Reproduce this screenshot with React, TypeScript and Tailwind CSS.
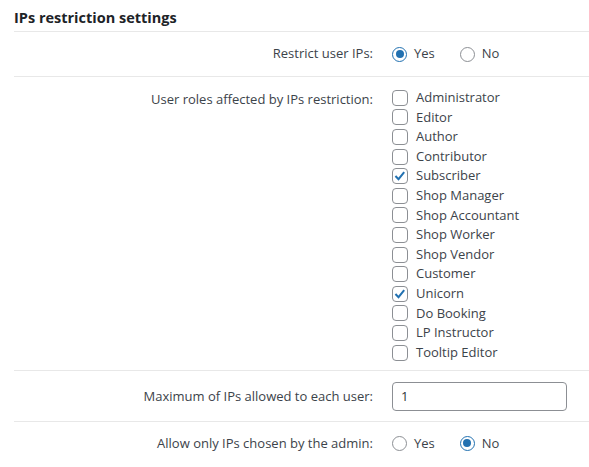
import React from "react";

const roles: { name: string; checked: boolean }[] = [
  { name: "Administrator", checked: false },
  { name: "Editor", checked: false },
  { name: "Author", checked: false },
  { name: "Contributor", checked: false },
  { name: "Subscriber", checked: true },
  { name: "Shop Manager", checked: false },
  { name: "Shop Accountant", checked: false },
  { name: "Shop Worker", checked: false },
  { name: "Shop Vendor", checked: false },
  { name: "Customer", checked: false },
  { name: "Unicorn", checked: true },
  { name: "Do Booking", checked: false },
  { name: "LP Instructor", checked: false },
  { name: "Tooltip Editor", checked: false },
];

const Radio = ({ checked, label }: { checked: boolean; label: string }) => (
  <label className="flex items-center gap-[7px]">
    <span
      className={`flex h-[15px] w-[15px] items-center justify-center rounded-full border ${
        checked ? "border-[#2271b1]" : "border-[#8c8f94]"
      } bg-white`}
    >
      {checked && <span className="h-[8px] w-[8px] rounded-full bg-[#2271b1]" />}
    </span>
    <span>{label}</span>
  </label>
);

const Checkbox = ({ checked, label }: { checked: boolean; label: string }) => (
  <label className="flex h-[19.6px] items-center gap-[8px]">
    <span className="flex h-[16px] w-[16px] items-center justify-center rounded-[4px] border border-[#8c8f94] bg-white">
      {checked && (
        <svg viewBox="0 0 16 16" className="h-[16px] w-[16px]">
          <path d="M2.8 8 L6.3 11.6 L12.8 3.6" fill="none" stroke="#2271b1" strokeWidth="2.3" />
        </svg>
      )}
    </span>
    <span>{label}</span>
  </label>
);

const Row = ({
  label,
  children,
  className,
  labelClass = "",
}: {
  label: string;
  children: React.ReactNode;
  className: string;
  labelClass?: string;
}) => (
  <div className={`flex border-b border-[#e8e8e8] ${className}`}>
    <div className={`w-[359px] shrink-0 text-right ${labelClass}`}>{label}</div>
    <div className="ml-[19px] flex-1">{children}</div>
  </div>
);

export default function App() {
  return (
    <div
      className="min-h-[467px] bg-white pl-[14px] text-[13px] text-[#3c434a]"
      style={{ fontFamily: '"Open Sans", "Noto Sans", sans-serif' }}
    >
      <h2 className="border-b border-[#e8e8e8] pt-[10px] pb-[5px] text-[14.5px] font-bold leading-[16px] text-[#1d2327]">
        IPs restriction settings
      </h2>
      <Row label="Restrict user IPs:" className="h-[45px] items-center">
        <div className="flex gap-[25px]">
          <Radio checked label="Yes" />
          <Radio checked={false} label="No" />
        </div>
      </Row>
      <Row label="User roles affected by IPs restriction:" className="pt-[11px] pb-[8px]" labelClass="pt-[2px]">
        <div className="flex flex-col">
          {roles.map((r) => (
            <Checkbox key={r.name} checked={r.checked} label={r.name} />
          ))}
        </div>
      </Row>
      <Row label="Maximum of IPs allowed to each user:" className="h-[51px] items-center">
        <div className="flex h-[29px] w-[175px] items-center rounded-[4px] border border-[#8c8f94] px-[8px] text-[#2c3338]">
          1
        </div>
      </Row>
      <div className="flex h-[42px] items-center">
        <div className="w-[359px] shrink-0 text-right">Allow only IPs chosen by the admin:</div>
        <div className="ml-[19px] flex gap-[25px]">
          <Radio checked={false} label="Yes" />
          <Radio checked label="No" />
        </div>
      </div>
    </div>
  );
}
